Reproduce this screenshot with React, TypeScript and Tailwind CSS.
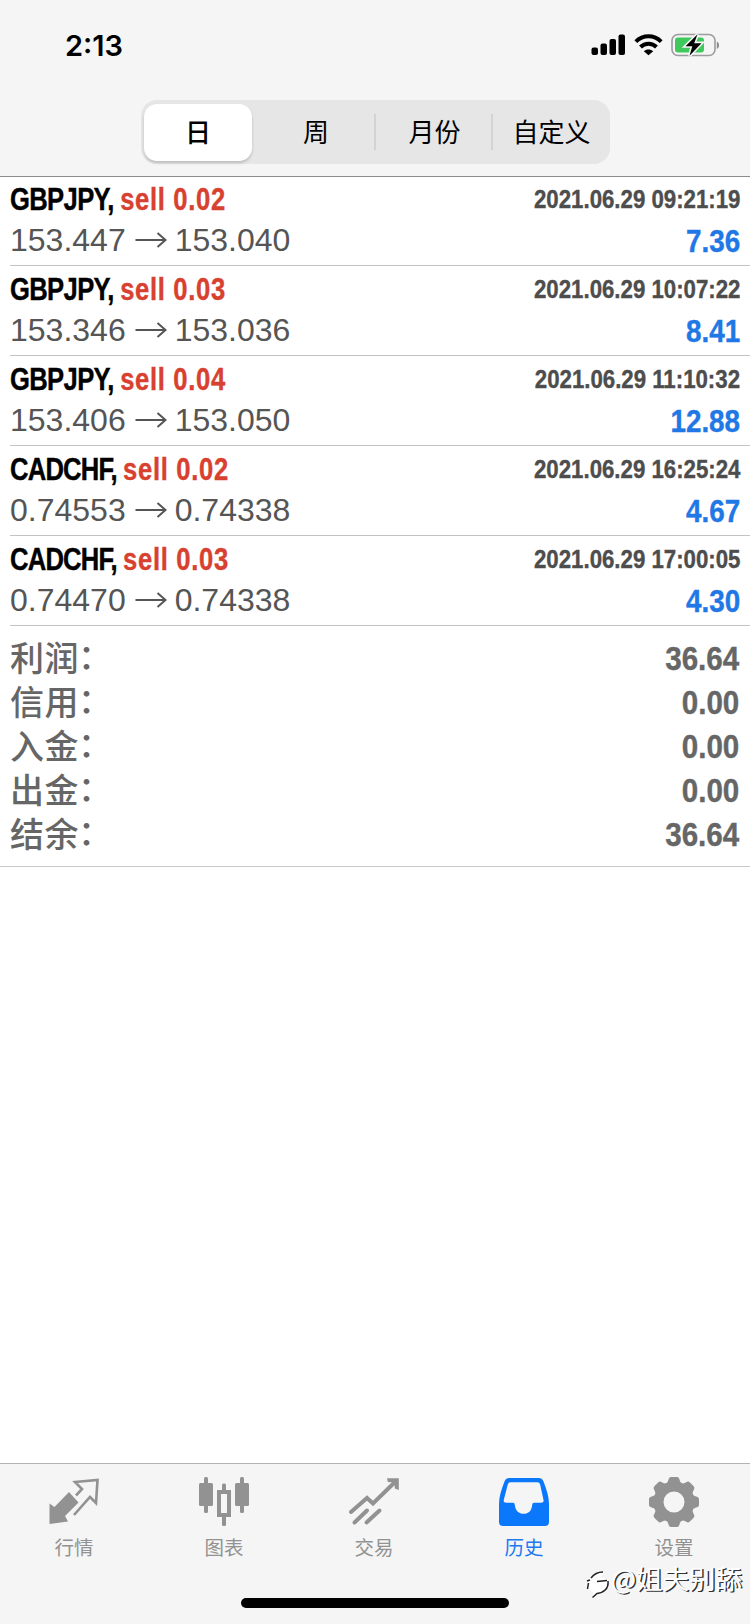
import React from 'react';

interface Deal {
  symbol: string;
  volume: string;
  open: string;
  close: string;
  time: string;
  profit: string;
}

const deals: Deal[] = [
  { symbol: 'GBPJPY', volume: '0.02', open: '153.447', close: '153.040', time: '2021.06.29 09:21:19', profit: '7.36' },
  { symbol: 'GBPJPY', volume: '0.03', open: '153.346', close: '153.036', time: '2021.06.29 10:07:22', profit: '8.41' },
  { symbol: 'GBPJPY', volume: '0.04', open: '153.406', close: '153.050', time: '2021.06.29 11:10:32', profit: '12.88' },
  { symbol: 'CADCHF', volume: '0.02', open: '0.74553', close: '0.74338', time: '2021.06.29 16:25:24', profit: '4.67' },
  { symbol: 'CADCHF', volume: '0.03', open: '0.74470', close: '0.74338', time: '2021.06.29 17:00:05', profit: '4.30' },
];

const totals = [
  { label: '利润', value: '36.64' },
  { label: '信用', value: '0.00' },
  { label: '入金', value: '0.00' },
  { label: '出金', value: '0.00' },
  { label: '结余', value: '36.64' },
];

// condensed bold: regular bold squeezed with scale-x on each element
const condensed = "font-['Liberation_Sans',sans-serif] font-bold leading-none whitespace-pre [-webkit-text-stroke:0.4px]";

const StatusBar: React.FC = () => (
  <div className="flex h-[90px] items-center justify-between pl-[65px] pr-[29px]">
    <span className="font-['Inter',sans-serif] text-[29px] font-semibold leading-none">2:13</span>
    <div className="flex items-center">
      <svg width="35" height="22" viewBox="0 0 35 22">
        <rect x="0.5" y="13.5" width="6.5" height="7.5" rx="2" />
        <rect x="9.5" y="9.5" width="6.5" height="11.5" rx="2" />
        <rect x="18.5" y="5" width="6.5" height="16" rx="2" />
        <rect x="27.5" y="0.5" width="6.5" height="20.5" rx="2" />
      </svg>
      <svg className="ml-2" width="29" height="22" viewBox="0 0 29 22" fill="none" stroke="#000">
        <path d="M1.8 7.6C9 .6 20 .6 27.2 7.6" strokeWidth="4" />
        <path d="M6.5 13C11 8.6 18 8.6 22.5 13" strokeWidth="4" />
        <path d="M14.5 21.3L9.8 17.2C12.3 15 16.7 15 19.2 17.2Z" fill="#000" stroke="none" />
      </svg>
      <svg className="ml-2" width="50" height="24" viewBox="0 0 50 24">
        <rect x="1" y="1.5" width="43" height="21" rx="6" fill="none" stroke="#9c9c9e" strokeWidth="1.6" />
        <path d="M45.8 8.5v7.5c3-1.4 3-6.1 0-7.5z" fill="#8c8c8e" />
        <rect x="4" y="4.5" width="29" height="15" rx="3" fill="#3fc95c" />
        <path d="M26.5 1.3L14.5 13.2h6.8L18.5 22.7L30.5 10.2h-7.3z" stroke="#f5f5f5" strokeWidth="3.2" paintOrder="stroke" />
      </svg>
    </div>
  </div>
);

const PeriodSwitch: React.FC = () => (
  <div className="ml-[141px] mt-[10px] flex h-[64px] w-[469px] items-center rounded-[16px] bg-[#e6e6e7] pl-[3px] font-['Noto_Sans_CJK_SC',sans-serif] text-[26px] leading-none">
    <div className="flex h-[57px] w-[108px] items-center justify-center rounded-[13px] bg-white pb-[3px] font-medium shadow-[0_2px_3px_rgba(0,0,0,0.18)]">日</div>
    <div className="flex w-[122px] justify-center pb-[3px] pl-[6px]">周</div>
    <div className="flex h-9 w-[119px] items-center justify-center border-x-2 border-[#d3d3d5] pb-[3px] pl-[2px]">月份</div>
    <div className="flex w-[117px] justify-center pb-[3px]">自定义</div>
  </div>
);

const DealRow: React.FC<{ deal: Deal }> = ({ deal }) => (
  <div className="ml-[10px] h-[90px] border-b border-[#c3c3c5] pr-[10px]">
    <div className="flex h-[45px] items-center justify-between">
      <div className={`${condensed} origin-left scale-x-80 text-[32px]`}>
        <span className={deal.symbol === 'CADCHF' ? 'tracking-[-1px]' : 'tracking-[-0.8px]'}>{deal.symbol}, </span>
        <span className="tracking-[0.85px] text-[#d8412f]">sell {deal.volume}</span>
      </div>
      <div className={`${condensed} origin-right scale-x-[.855] text-[26px] text-[#4d4d4d]`}>{deal.time}</div>
    </div>
    <div className="flex h-[38px] items-center justify-between">
      <div className="flex items-center font-['Liberation_Sans',sans-serif] text-[32px] leading-none text-[#555]">
        <span>{deal.open}</span>
        <svg className="ml-[9px] mr-[8px]" width="32" height="18" viewBox="0 0 32 18" fill="none" stroke="#555" strokeWidth="2">
          <path d="M0.5 9h29.5M22.5 2l8 7l-8 7" />
        </svg>
        <span>{deal.close}</span>
      </div>
      <div className={`${condensed} origin-right scale-x-[.87] pt-px text-[32px] text-[#1f78e6]`}>{deal.profit}</div>
    </div>
  </div>
);

const gray = '#929292';

const QuotesIcon = () => (
  <svg width="50" height="50" viewBox="0 0 50 50">
    <path d="M0.5 26.5L5.5 30L20 15L29.500 25.5L16 39L19 44.5L0.5 47z" fill={gray} />
    <path d="M27 18.5L33 12L26 5L48.5 3L47 26L41 20L25 38" fill="none" stroke={gray} strokeWidth="2.6" />
  </svg>
);

const ChartIcon = () => (
  <svg width="50" height="50" viewBox="0 0 50 50" fill={gray}>
    <rect x="5" y="0" width="4" height="36" rx="1.5" />
    <rect x="0" y="6" width="14" height="23" rx="1.5" />
    <rect x="41" y="0" width="4" height="36" rx="1.5" />
    <rect x="36" y="6" width="14" height="23" rx="1.5" />
    <rect x="23" y="6.5" width="4" height="8" rx="1.5" />
    <rect x="23" y="38" width="4" height="11" rx="1.5" />
    <rect x="20" y="15" width="10" height="23" fill="none" stroke={gray} strokeWidth="4" />
  </svg>
);

const TradeIcon = () => (
  <svg width="50" height="50" viewBox="0 0 50 50" fill="none" stroke={gray} strokeWidth="4" strokeLinecap="round">
    <path d="M2 35L18 21L24 26.5L46 5" strokeLinejoin="miter" />
    <path d="M38 1.2h11.8v11.8l-4-1.5l-.5-6l-6.5-.5z" fill={gray} stroke="none" />
    <path d="M5.5 45.5L18 33.5M17.5 45.5L30.5 33.5" />
  </svg>
);

const HistoryIcon = () => (
  <svg width="50" height="50" viewBox="0 0 50 50">
    <path
      fillRule="evenodd"
      fill="#0b78fb"
      d="M10.5 1h29c3 0 4.3 1.5 5.2 4C47.5 12.5 50 19.5 50 27v18c0 2.6-1.4 4-4 4H4c-2.6 0-4-1.4-4-4V27C0 19.5 2.5 12.5 5.3 5C6.2 2.5 7.5 1 10.5 1zM12 5.2c-1.9 0-2.7.8-3.3 2.5L4.9 22.5c-.6 2.2.1 3.3 2.5 3.3h6.6c1.2 0 1.6.8 1.8 2.2C16.5 34 20 36.8 24.7 36.8S32.5 34 33.2 28c.2-1.4.7-2.2 1.9-2.2H42c2.4 0 3-1.1 2.4-3.3L41.2 7.7c-.5-1.7-1.4-2.5-3.2-2.5z"
    />
  </svg>
);

const SettingsIcon = () => (
  <svg width="50" height="50" viewBox="0 0 50 50">
    <circle cx="25" cy="25" r="15.5" fill="none" stroke={gray} strokeWidth="10" />
    <g fill={gray}>
      {[0, 45, 90, 135, 180, 225, 270, 315].map((angle) => (
        <path key={angle} d="M16.5 8C19 5.5 19 3.5 20 1.3Q20.5 0 22.5 0h5Q29.5 0 30 1.3C31 3.5 31 5.5 33.5 8z" transform={`rotate(${angle} 25 25)`} />
      ))}
    </g>
  </svg>
);

const tabs = [
  { label: '行情', icon: QuotesIcon },
  { label: '图表', icon: ChartIcon },
  { label: '交易', icon: TradeIcon },
  { label: '历史', icon: HistoryIcon, active: true },
  { label: '设置', icon: SettingsIcon },
];

const TabBar: React.FC = () => (
  <div className="relative h-[161px] border-t border-[#b3b3b5] bg-[#f5f5f5]">
    <div className="-ml-px grid w-[750px] grid-cols-5 pt-[13px]">
      {tabs.map(({ label, icon: Icon, active }) => (
        <div key={label} className="flex flex-col items-center">
          <Icon />
          <span className={`mt-[10px] font-['Noto_Sans_CJK_SC',sans-serif] text-[19.5px] leading-none ${active ? 'text-[#1c7bf0]' : 'text-[#929292]'}`}>
            {label}
          </span>
        </div>
      ))}
    </div>

    {/* author mark floating over the bar */}
    <div className="absolute left-[585px] top-[93px] flex items-center">
      <svg className="mt-3" width="25" height="30" viewBox="0 0 25 30">
        <path d="M3.5 20.5C0 9 9 3 19 3L16 8L22 10C26 18 19 24 11 24L7 28.5L8.5 22.5z" fill="#fff" />
        <path d="M2.5 20l1-6M2 12l3-1M6 9c3-4 7-6 12-6M12 12.5l10-1M23 12c1 8-5 12-11 12.5l-4.5 4" fill="none" stroke="#222" strokeWidth="1.5" />
      </svg>
      <span className="whitespace-nowrap pl-px font-['Noto_Sans_CJK_SC',sans-serif] text-[26.5px] leading-[32px] text-white [text-shadow:1.5px_1px_0_#333]">
        @姐夫别舔
      </span>
    </div>

    <div className="absolute bottom-[16px] left-[241px] h-[10px] w-[268px] rounded-full bg-black" />
  </div>
);

export default function App() {
  return (
    <div className="flex h-[1624px] w-[750px] flex-col overflow-hidden bg-white text-black">
      <header className="h-[177px] border-b border-[#8c8c8e] bg-[#f5f5f5]">
        <StatusBar />
        <PeriodSwitch />
      </header>

      <main className="-mt-px flex-1">
        {deals.map((deal) => (
          <DealRow key={deal.time} deal={deal} />
        ))}
        <div className="h-[241px] border-b border-[#c8c8ca] px-[10px] pt-[11px] text-[#666]">
          {totals.map(({ label, value }) => (
            <div key={label} className="flex h-[44px] items-center justify-between">
              <span className="flex font-['Liberation_Sans','Noto_Sans_CJK_SC',sans-serif] text-[34px] font-medium leading-none tracking-[0.5px]">
                {label}
                <span className="-ml-px -translate-y-[2px]">：</span>
              </span>
              <span className={`${condensed} origin-right scale-x-[.87] pb-[2px] pr-px text-[34px]`}>{value}</span>
            </div>
          ))}
        </div>
      </main>

      <TabBar />
    </div>
  );
}
